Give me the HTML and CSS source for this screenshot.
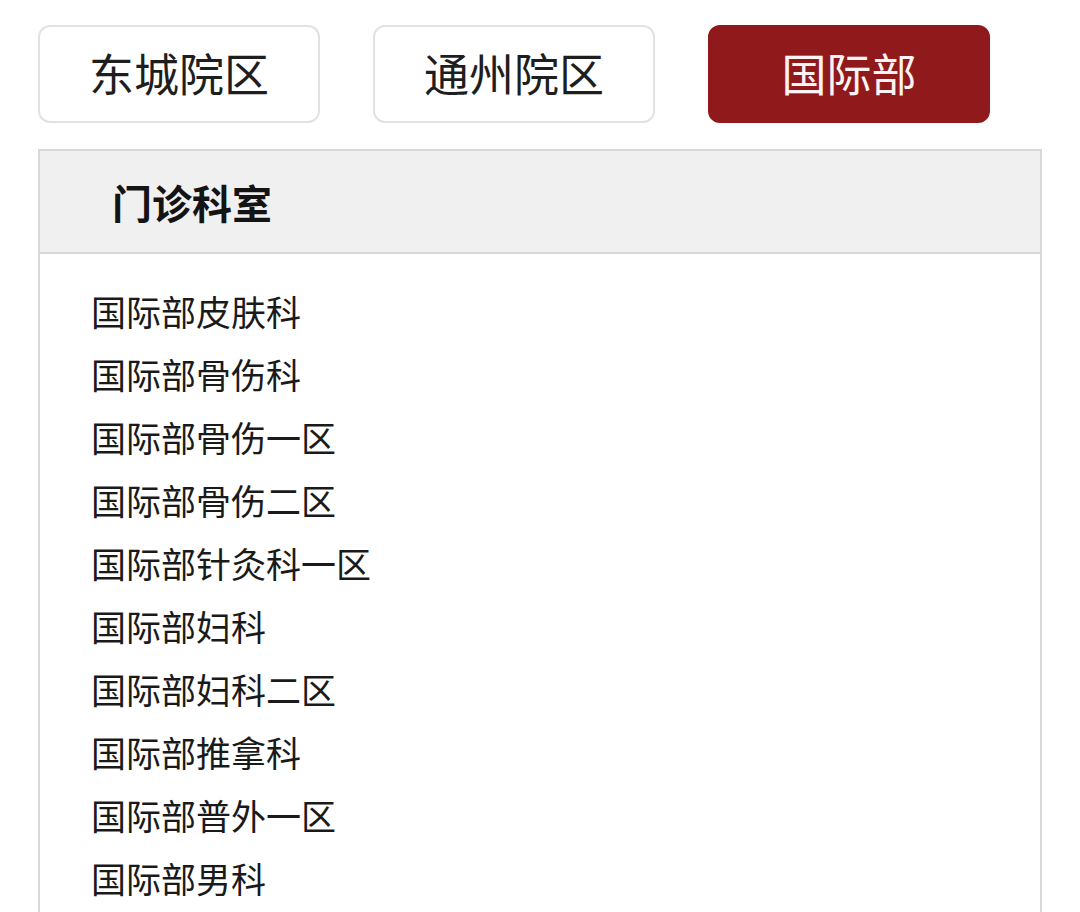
FILE: index.html
```html
<!DOCTYPE html>
<html lang="zh-CN">
<head>
<meta charset="utf-8">
<title>门诊科室</title>
<link rel="stylesheet" href="styles.css">
</head>
<body>
<div class="page">
  <div class="tabs">
    <div class="tab">东城院区</div>
    <div class="tab">通州院区</div>
    <div class="tab active">国际部</div>
  </div>
  <div class="panel">
    <div class="panel-head">门诊科室</div>
    <ul class="list">
      <li>国际部皮肤科</li>
      <li>国际部骨伤科</li>
      <li>国际部骨伤一区</li>
      <li>国际部骨伤二区</li>
      <li>国际部针灸科一区</li>
      <li>国际部妇科</li>
      <li>国际部妇科二区</li>
      <li>国际部推拿科</li>
      <li>国际部普外一区</li>
      <li>国际部男科</li>
    </ul>
  </div>
</div>
</body>
</html>
```
FILE: styles.css
```css
html, body {
  margin: 0;
  padding: 0;
  background: #fff;
  height: 912px;
  overflow: hidden;
}
body {
  font-family: "Noto Sans CJK SC", "Noto Sans", sans-serif;
  color: #1c1c1c;
}
.page {
  padding: 25px 38px 0 38px;
}
.tabs {
  display: flex;
  gap: 53px;
}
.tab {
  box-sizing: border-box;
  width: 282px;
  height: 98px;
  border: 2px solid #e2e2e2;
  border-radius: 12px;
  display: flex;
  align-items: center;
  justify-content: center;
  padding-bottom: 3px;
  font-size: 45px;
  color: #1e1e1e;
  background: #fff;
}
.tab.active {
  background: #901a1b;
  border-color: #901a1b;
  color: #fdf3f3;
}
.panel {
  box-sizing: border-box;
  width: 1004px;
  margin-top: 26px;
  border: 2px solid #d8d8d8;
  border-bottom: none;
  height: 763px;
  overflow: hidden;
}
.panel-head {
  height: 101px;
  background: #f0f0f0;
  border-bottom: 2px solid #d8d8d8;
  display: flex;
  align-items: center;
  padding-left: 72px;
  font-size: 40px;
  font-weight: bold;
  color: #141414;
}
.list {
  list-style: none;
  margin: 0;
  padding: 25px 0 0 51px;
}
.list li {
  font-size: 35px;
  line-height: 63px;
  color: #1a1a1a;
}
```
